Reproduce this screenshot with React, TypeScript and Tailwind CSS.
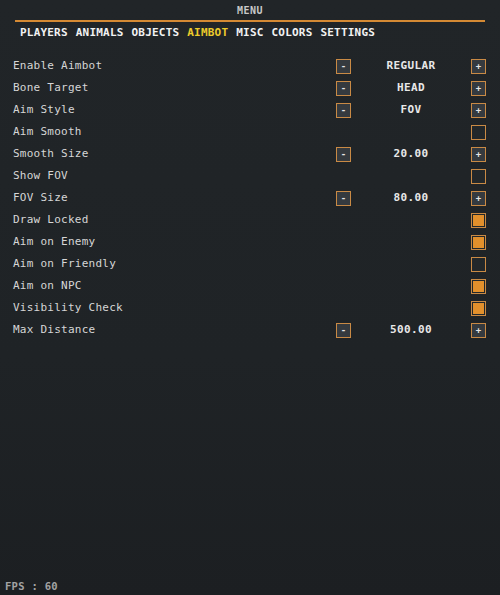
import React from "react";

type Row =
  | { label: string; kind: "stepper"; value: string }
  | { label: string; kind: "check"; checked: boolean };

const rows: Row[] = [
  { label: "Enable Aimbot", kind: "stepper", value: "REGULAR" },
  { label: "Bone Target", kind: "stepper", value: "HEAD" },
  { label: "Aim Style", kind: "stepper", value: "FOV" },
  { label: "Aim Smooth", kind: "check", checked: false },
  { label: "Smooth Size", kind: "stepper", value: "20.00" },
  { label: "Show FOV", kind: "check", checked: false },
  { label: "FOV Size", kind: "stepper", value: "80.00" },
  { label: "Draw Locked", kind: "check", checked: true },
  { label: "Aim on Enemy", kind: "check", checked: true },
  { label: "Aim on Friendly", kind: "check", checked: false },
  { label: "Aim on NPC", kind: "check", checked: true },
  { label: "Visibility Check", kind: "check", checked: true },
  { label: "Max Distance", kind: "stepper", value: "500.00" },
];

const tabs = ["PLAYERS", "ANIMALS", "OBJECTS", "AIMBOT", "MISC", "COLORS", "SETTINGS"];

function Btn({ sign }: { sign: string }) {
  return (
    <div className="w-[15px] h-[15px] border border-[#c98a45] bg-[#353a3f] flex items-center justify-center text-[9px] leading-none font-bold text-[#e6e6e6]">
      {sign}
    </div>
  );
}

function Check({ checked }: { checked: boolean }) {
  return (
    <div className="w-[15px] h-[15px] border border-[#c98a45] p-[1px] bg-[#22272a]">
      {checked && <div className="w-full h-full bg-[#e2902c]" />}
    </div>
  );
}

export default function App() {
  return (
    <div
      className="w-[500px] h-[595px] bg-[linear-gradient(180deg,#212528_0%,#1f2326_60%,#1c1f22_100%)] flex flex-col text-[11px]"
      style={{ fontFamily: '"DejaVu Sans Mono", "Liberation Mono", monospace' }}
    >
      <div className="h-[20px] flex items-center justify-center font-bold text-[#c9c9c9] text-[10px] tracking-[0.5px]">
        MENU
      </div>
      <div className="mx-[15px] h-[2px] bg-[#d58a34]" />
      <div className="flex px-[20px] gap-[8px] h-[22px] pt-[1px] items-center font-bold text-[#f2f2f2] text-[11px] tracking-[0.2px]">
        {tabs.map((t) => (
          <span key={t} className={t === "AIMBOT" ? "text-[#eccb2c]" : ""}>
            {t}
          </span>
        ))}
      </div>
      <div className="flex flex-col pt-[11px] pl-[13px] pr-[14px]">
        {rows.map((r) => (
          <div key={r.label} className="h-[22px] flex items-center">
            <span className="flex-1 text-[#d6d6d6] tracking-[0.25px]">{r.label}</span>
            <div className="w-[150px] flex items-center justify-between">
              {r.kind === "stepper" ? (
                <>
                  <Btn sign="-" />
                  <span className="text-[#e8e8e8] font-semibold text-[11px] tracking-[0.4px]">{r.value}</span>
                  <Btn sign="+" />
                </>
              ) : (
                <>
                  <span />
                  <Check checked={r.checked} />
                </>
              )}
            </div>
          </div>
        ))}
      </div>
      <div className="mt-auto pl-[5px] pb-[1px] h-[16px] text-[#a3a3a3] text-[10.5px] font-bold tracking-[0.3px]">
        FPS : 60
      </div>
    </div>
  );
}
